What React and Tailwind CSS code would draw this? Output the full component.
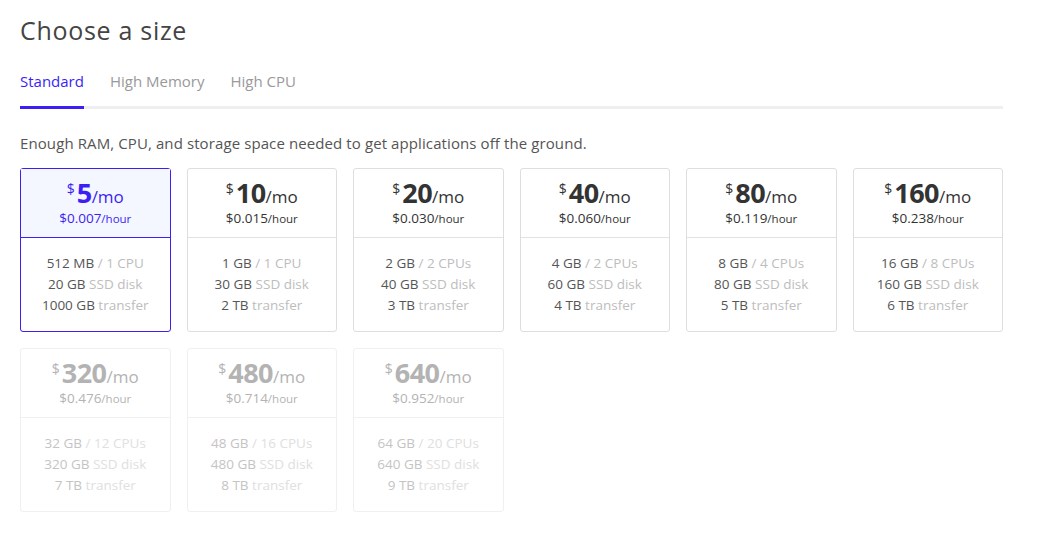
import React from "react";

const plans = [
  { mo: 5, hr: "0.007", ram: "512 MB", cpu: "1 CPU", disk: "20 GB", transfer: "1000 GB", selected: true },
  { mo: 10, hr: "0.015", ram: "1 GB", cpu: "1 CPU", disk: "30 GB", transfer: "2 TB" },
  { mo: 20, hr: "0.030", ram: "2 GB", cpu: "2 CPUs", disk: "40 GB", transfer: "3 TB" },
  { mo: 40, hr: "0.060", ram: "4 GB", cpu: "2 CPUs", disk: "60 GB", transfer: "4 TB" },
  { mo: 80, hr: "0.119", ram: "8 GB", cpu: "4 CPUs", disk: "80 GB", transfer: "5 TB" },
  { mo: 160, hr: "0.238", ram: "16 GB", cpu: "8 CPUs", disk: "160 GB", transfer: "6 TB" },
  { mo: 320, hr: "0.476", ram: "32 GB", cpu: "12 CPUs", disk: "320 GB", transfer: "7 TB", disabled: true },
  { mo: 480, hr: "0.714", ram: "48 GB", cpu: "16 CPUs", disk: "480 GB", transfer: "8 TB", disabled: true },
  { mo: 640, hr: "0.952", ram: "64 GB", cpu: "20 CPUs", disk: "640 GB", transfer: "9 TB", disabled: true },
];

function PlanCard({ plan }) {
  const { selected, disabled } = plan;

  const border = selected
    ? "border-[#3b1ff5]"
    : disabled
    ? "border-[#f0f0f0]"
    : "border-[#dedede]";
  const divider = selected
    ? "border-[#3b1ff5]"
    : disabled
    ? "border-[#f0f0f0]"
    : "border-[#e2e2e2]";
  const priceColor = selected
    ? "text-[#3b1ff5]"
    : disabled
    ? "text-[#b3b3b3]"
    : "text-[#333333]";
  const valueColor = disabled ? "text-[#c4c4c4]" : "text-[#555555]";
  const labelColor = disabled ? "text-[#e0e0e0]" : "text-[#bdbdbd]";

  return (
    <div className={`flex flex-col h-[164px] rounded-[3px] border ${border}`}>
      <div
        className={`h-[69px] flex flex-col items-center justify-center border-b ${divider} ${
          selected ? "bg-[#f4f7ff]" : ""
        } ${priceColor}`}
      >
        <div className="flex items-baseline leading-[28px]">
          <span className="relative -top-[9px] text-[14px] leading-[14px] mr-[2px]">$</span>
          <span className="text-[27px] font-bold tracking-[-0.5px]">{plan.mo}</span>
          <span className="text-[17px]">/mo</span>
        </div>
        <div className="text-[13.5px] leading-[14px]">
          ${plan.hr}
          <span className="text-[11.5px]">/hour</span>
        </div>
      </div>
      <div className="flex-1 flex flex-col items-center pt-[15px] text-[13.5px] leading-[21px]">
        <div>
          <span className={valueColor}>{plan.ram}</span>
          <span className={labelColor}> / {plan.cpu}</span>
        </div>
        <div>
          <span className={valueColor}>{plan.disk}</span>
          <span className={labelColor}> SSD disk</span>
        </div>
        <div>
          <span className={valueColor}>{plan.transfer}</span>
          <span className={labelColor}> transfer</span>
        </div>
      </div>
    </div>
  );
}

export default function App() {
  return (
    <div
      className="min-h-[539px] bg-white pl-5 pt-[14px]"
      style={{ fontFamily: "'Open Sans', 'Liberation Sans', sans-serif" }}
    >
      <div className="w-[983px]">
        <h2 className="text-[25px] leading-[32px] text-[#444444] tracking-[0.7px]">Choose a size</h2>

        {/* Tabs */}
        <div className="mt-[24px] flex gap-[26px] border-b-[3px] border-[#efefef] text-[15px]">
          <div className="relative pb-[13px] text-[#3b1ff5]">
            Standard
            <div className="absolute left-0 right-0 -bottom-[3px] h-[3px] bg-[#3b1ff5]" />
          </div>
          <div className="pb-[13px] text-[#999999]">High Memory</div>
          <div className="pb-[13px] text-[#999999]">High CPU</div>
        </div>

        <p className="mt-[24px] text-[15px] leading-[20px] text-[#555555] tracking-[0.1px]">
          Enough RAM, CPU, and storage space needed to get applications off the ground.
        </p>

        <div className="mt-[15px] grid grid-cols-6 gap-4">
          {plans.map((p) => (
            <PlanCard key={p.mo} plan={p} />
          ))}
        </div>
      </div>
    </div>
  );
}
